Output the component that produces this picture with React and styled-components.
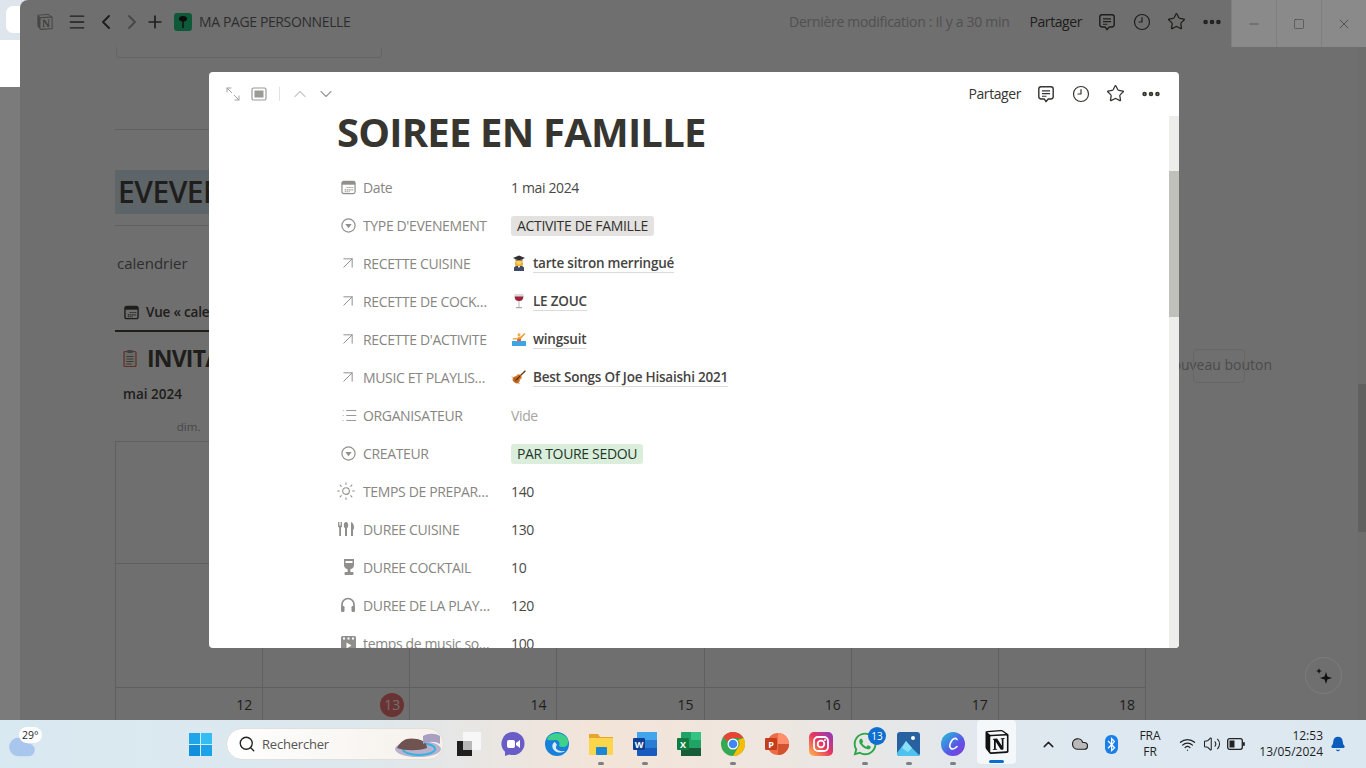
import React from "react";
import styled, { createGlobalStyle } from "styled-components";
import {
  ArrowUpRight,
  Bell,
  ChevronDown,
  ChevronLeft,
  ChevronRight,
  ChevronUp,
  Clock9,
  Cloud,
  List,
  Maximize2,
  Menu,
  Minus,
  MoreHorizontal,
  Plus,
  Search,
  Square,
  Star,
  Sun,
  Volume2,
  Wifi,
  X,
} from "lucide-react";
import { SiNotion } from "react-icons/si";
import { FaBluetoothB, FaWhatsapp } from "react-icons/fa";

const SANS = `"Open Sans", "Noto Sans", sans-serif`;

const GlobalStyle = createGlobalStyle`
  html, body { margin: 0; padding: 0; height: 100%; overflow: hidden; }
  body { font-family: ${SANS}; background: #dfe5ec; }
  * { box-sizing: border-box; }
  svg { flex: none; }
`;

const Desktop = styled.div`
  width: 1366px;
  height: 768px;
  display: flex;
  flex-direction: column;
  overflow: hidden;
`;

const Workspace = styled.div`
  height: 720px;
  display: flex;
`;

const BrowserEdge = styled.div`
  width: 20px;
  display: flex;
  flex-direction: column;
  background: #7b7b7b;
`;

const EdgeTop = styled.div`
  height: 87px;
  background: #dfe5ec;
  padding-top: 6px;
  display: flex;
  flex-direction: column;
  align-items: flex-end;
  gap: 7px;
`;

const EdgeTab = styled.div`
  width: ${({ wide }) => (wide ? "20px" : "14px")};
  height: ${({ wide }) => (wide ? "47px" : "27px")};
  background: #fff;
  border-radius: ${({ wide }) => (wide ? "0" : "7px 0 0 7px")};
`;

const AppWindow = styled.div`
  flex: 1;
  min-width: 0;
  position: relative;
  display: flex;
  flex-direction: column;
  background: #fff;
  border-radius: 8px 0 0 0;
  overflow: hidden;
`;

const TitleBar = styled.header`
  height: 47px;
  flex: none;
  display: flex;
  align-items: center;
  padding: 0 0 4px 17px;
  color: #37352f;
  font-size: 14px;
`;

const TitleIcon = styled.span`
  display: flex;
  justify-content: center;
  flex: none;
  width: ${({ w }) => w}px;
  color: ${({ faint }) => (faint ? "#9b9a97" : "#37352f")};
`;

const PageBadge = styled.span`
  width: 18px;
  height: 18px;
  margin-left: 17px;
  border-radius: 3px;
  background: #0ec97a;
  display: flex;
  align-items: center;
  justify-content: center;
`;

const PageName = styled.span`
  margin-left: 7px;
  letter-spacing: -0.38px;
  color: #5b5b60;
`;

const Edited = styled.span`
  margin-left: auto;
  color: #b4b3b0;
  letter-spacing: -0.3px;
`;

const ShareLabel = styled.span`
  font-size: 14px;
  letter-spacing: -0.42px;
  color: #37352f;
`;

const TitleActions = styled.div`
  display: flex;
  align-items: center;
  margin-left: 20px;
  margin-right: 2px;
`;

const ActionsGroup = styled.div`
  display: flex;
  align-items: center;
  margin-left: 7px;
`;

const ActionSlot = styled.span`
  width: 35px;
  display: flex;
  justify-content: center;
  color: #37352f;
`;

const WindowControls = styled.div`
  position: relative;
  z-index: 2;
  align-self: flex-start;
  display: flex;
  height: 47px;
`;

const WindowControl = styled.span`
  width: 45px;
  height: 47px;
  display: flex;
  align-items: center;
  justify-content: center;
  background: #8a8a8a;
  border-left: 1px solid #7f7f7f;
  color: #333;
`;

const Main = styled.div`
  flex: 1;
  min-height: 0;
  display: flex;
`;

const Page = styled.main`
  flex: 1;
  min-width: 0;
  padding-left: 95px;
  display: flex;
  flex-direction: column;
  color: #37352f;
  overflow: hidden;
  & > * {
    flex: none;
  }
`;

const CardTail = styled.div`
  width: 266px;
  height: 11px;
  margin-left: 1px;
  border: 1px solid #e4e4e2;
  border-top: 0;
  border-radius: 0 0 4px 4px;
`;

const Rule = styled.hr`
  width: 1031px;
  margin: ${({ top }) => top}px 0 0;
  border: 0;
  border-top: 1px solid #dcdbd8;
`;

const SectionHeading = styled.h2`
  margin: 40px 0 0;
  width: 400px;
  height: 44px;
  padding-left: 3px;
  background: #d3e5ef;
  color: #37352f;
  font-size: 30px;
  font-weight: 600;
  line-height: 44px;
  letter-spacing: -0.5px;
`;

const Description = styled.p`
  margin: 27px 0 0 2px;
  font-size: 15px;
  line-height: 20px;
  color: #5c5c5c;
`;

const ViewTab = styled.div`
  margin-top: 30px;
  width: 1031px;
  height: 29px;
  font-size: 13.5px;
  font-weight: 600;
  letter-spacing: -0.2px;
`;

const ViewUnderline = styled.span`
  height: 29px;
  width: 220px;
  padding-left: 9px;
  display: flex;
  align-items: flex-start;
  gap: 7px;
  line-height: 18px;
  white-space: nowrap;
  border-bottom: 2px solid #37352f;
`;

const CollectionRow = styled.div`
  width: 1157px;
  height: 36px;
  margin-top: 8px;
  display: flex;
  align-items: center;
  justify-content: space-between;
  padding-left: 8px;
`;

const CollectionTitle = styled.h3`
  margin: 0;
  display: flex;
  align-items: center;
  gap: 10px;
  font-size: 23px;
  font-weight: 700;
  letter-spacing: -0.8px;
`;

const NewButton = styled.span`
  position: relative;
  margin-top: 12px;
  font-size: 14px;
  font-weight: 500;
  color: #a5a5a5;
  white-space: nowrap;
  &::after {
    content: "";
    position: absolute;
    left: 29px;
    top: -6px;
    width: 50px;
    height: 32px;
    border: 1px solid #e8e8e8;
    border-radius: 4px;
  }
`;

const MonthLabel = styled.div`
  margin: 9px 0 0 8px;
  font-size: 13.5px;
  font-weight: 600;
  line-height: 18px;
`;

const WeekDays = styled.div`
  width: 1031px;
  margin-top: 16px;
  height: 22px;
  display: grid;
  grid-template-columns: repeat(7, 1fr);
  font-size: 11.5px;
  color: #9b9a97;
  text-align: center;
`;

const CalendarGrid = styled.div`
  width: 1031px;
  display: grid;
  grid-template-columns: repeat(7, 1fr);
  grid-template-rows: 122px 124px 60px;
  border-top: 1px solid #d8d8d6;
  border-left: 1px solid #d8d8d6;
`;

const DayCell = styled.div`
  border-right: 1px solid #d8d8d6;
  border-bottom: 1px solid #d8d8d6;
  padding: 5px ${({ today }) => (today ? "5px" : "10px")} 0 0;
  display: flex;
  justify-content: flex-end;
  font-size: 14px;
  line-height: 24px;
  color: #37352f;
`;

const TodayMark = styled.span`
  width: 24px;
  height: 24px;
  border-radius: 50%;
  background: #f06a6a;
  color: #fff;
  text-align: center;
`;

const PageScroll = styled.div`
  width: 8px;
  flex: none;
  padding-top: 337px;
  background: #fcfcfb;
`;

const PageThumb = styled.div`
  height: 148px;
  background: #d9d9d5;
`;

const Scrim = styled.div`
  position: absolute;
  inset: 0;
  z-index: 1;
  padding-left: 2px;
  background: rgba(15, 15, 15, 0.6);
  display: flex;
  align-items: center;
  justify-content: center;
`;

const AiButton = styled.span`
  position: absolute;
  right: 24px;
  bottom: 26px;
  width: 37px;
  height: 37px;
  border-radius: 50%;
  border: 1px solid #7d7d7d;
  display: flex;
  align-items: center;
  justify-content: center;
`;

const Modal = styled.section`
  width: 970px;
  height: 576px;
  background: #fff;
  border-radius: 4px;
  display: flex;
  flex-direction: column;
  overflow: hidden;
`;

const ModalBar = styled.div`
  height: 44px;
  flex: none;
  padding: 0 11px 1px 11px;
  display: flex;
  align-items: center;
`;

const ModalTool = styled.span`
  width: 26px;
  display: flex;
  justify-content: center;
  color: ${({ light }) => (light ? "#c9c8c5" : "#9b9a97")};
`;

const ModalDivider = styled.span`
  width: 1px;
  height: 14px;
  margin: 0 7px;
  background: #e3e2e0;
`;

const ModalActions = styled.div`
  margin-left: auto;
  display: flex;
  align-items: center;
`;

const ModalBody = styled.div`
  flex: 1;
  min-height: 0;
  display: flex;
`;

const ModalContent = styled.div`
  flex: 1;
  min-width: 0;
  padding-left: 128px;
  overflow: hidden;
  color: #37352f;
`;

const ModalScroll = styled.div`
  width: 10px;
  flex: none;
  padding-top: 55px;
  background: #ededeb;
`;

const ModalThumb = styled.div`
  height: 146px;
  background: #c0c0bb;
`;

const DocTitle = styled.h1`
  margin: -6px 0 0;
  height: 44px;
  font-size: 40px;
  font-weight: 700;
  line-height: 44px;
  letter-spacing: -0.8px;
  white-space: nowrap;
`;

const Properties = styled.div`
  margin-top: 14px;
  display: flex;
  flex-direction: column;
`;

const PropRow = styled.div`
  height: 38px;
  flex: none;
  display: flex;
  align-items: center;
  font-size: 14px;
`;

const PropIcon = styled.span`
  width: 26px;
  height: 18px;
  flex: none;
  padding-left: 4px;
  display: flex;
  align-items: center;
  color: #908f8b;
`;

const PropLabel = styled.span`
  width: 128px;
  margin-right: 20px;
  flex: none;
  color: #878682;
  letter-spacing: -0.36px;
  white-space: nowrap;
  overflow: hidden;
  text-overflow: ellipsis;
`;

const PropValue = styled.span`
  letter-spacing: -0.36px;
  color: ${({ empty }) => (empty ? "#a5a4a1" : "#4a4945")};
`;

const Tag = styled.span`
  height: 20px;
  margin-top: 1px;
  padding: 0 6px;
  border-radius: 3px;
  line-height: 20px;
  letter-spacing: -0.33px;
  background: ${({ green }) => (green ? "#dbeddb" : "#e3e2e0")};
  color: ${({ green }) => (green ? "#1c3829" : "#32302c")};
`;

const Relation = styled.span`
  display: flex;
  align-items: center;
  gap: 6px;
`;

const RelationEmoji = styled.span`
  width: 16px;
  height: 16px;
  display: flex;
`;

const RelationText = styled.span`
  font-weight: 600;
  font-size: 13.5px;
  line-height: 18px;
  letter-spacing: -0.22px;
  color: #45443f;
  border-bottom: 1px solid #dcdbd8;
`;

const Taskbar = styled.footer`
  height: 48px;
  flex: none;
  display: flex;
  align-items: center;
  background: linear-gradient(90deg, #d9e9f1 0%, #dde8ee 26%, #f3e4d8 44%, #efe6df 55%, #dfe8ef 74%, #dce8f1 100%);
  color: #1f1f1f;
`;

const Weather = styled.div`
  position: relative;
  width: 189px;
  height: 48px;
  flex: none;
  padding: 13px 0 0 8px;
`;

const WeatherTemp = styled.span`
  position: absolute;
  left: 19px;
  top: 7px;
  padding: 0 3px;
  border-radius: 8px;
  background: #fff;
  font-size: 10.5px;
  line-height: 16px;
`;

const StartSlot = styled.span`
  width: 37px;
  flex: none;
  display: flex;
`;

const SearchBox = styled.div`
  width: 218px;
  height: 32px;
  flex: none;
  padding-left: 11px;
  display: flex;
  align-items: center;
  gap: 6px;
  border-radius: 16px;
  border: 1px solid #e2dfda;
  background: linear-gradient(90deg, #ffffff, #f5f0ea);
  font-size: 13px;
  letter-spacing: -0.2px;
  color: #555;
`;

const SearchArt = styled.span`
  margin-left: auto;
  display: flex;
`;

const Apps = styled.div`
  margin-left: 3px;
  display: flex;
`;

const AppSlot = styled.span`
  position: relative;
  width: 44px;
  height: 48px;
  display: flex;
  align-items: center;
  justify-content: center;
  &::after {
    content: "";
    display: ${({ open }) => (open ? "block" : "none")};
    position: absolute;
    left: 19px;
    bottom: 3px;
    width: 6px;
    height: 3px;
    border-radius: 2px;
    background: #7c7f83;
  }
`;

const ActiveApp = styled(AppSlot)`
  width: 39px;
  height: 44px;
  margin-left: 2px;
  border-radius: 4px;
  background: #f5f8fa;
  &::after {
    display: block;
    left: 12px;
    bottom: 1px;
    width: 15px;
    background: #0a6fd1;
  }
`;

const AppBadge = styled.span`
  position: absolute;
  right: 1px;
  top: 7px;
  width: 18px;
  height: 18px;
  border-radius: 50%;
  background: #0f6fd0;
  color: #fff;
  font-size: 10px;
  line-height: 18px;
  text-align: center;
`;

const Tray = styled.div`
  margin-left: 22px;
  display: flex;
  align-items: center;
`;

const TraySlot = styled.span`
  width: ${({ w }) => w}px;
  display: flex;
  justify-content: center;
  color: #222;
`;

const Language = styled.span`
  width: 40px;
  margin: 0 5px 0 10px;
  text-align: center;
  font-size: 12px;
  line-height: 16px;
`;

const DateTime = styled.span`
  width: 74px;
  margin-left: 1px;
  text-align: right;
  font-size: 12px;
  line-height: 16px;
`;

const propIcons = {
  date: (
    <svg width="15" height="15" viewBox="0 0 16 16">
      <rect x="1" y="1.500" width="14" height="13" rx="2" fill="none" stroke="currentColor" strokeWidth="1.300" />
      <rect x="1" y="2" width="14" height="3" fill="currentColor" />
      <path d="M6 8h7M4 10.500h9M4 12.500h6" stroke="currentColor" strokeWidth="1.200" strokeDasharray="1.300 .7" />
    </svg>
  ),
  select: (
    <svg width="15" height="15" viewBox="0 0 15 15">
      <circle cx="7.500" cy="7.500" r="6.600" fill="none" stroke="currentColor" strokeWidth="1.200" />
      <path d="M4.300 6h6.400L7.500 10.300z" fill="currentColor" />
    </svg>
  ),
  relation: <ArrowUpRight size={20} strokeWidth={1.2} style={{ marginLeft: -3 }} />,
  list: <List size={17} strokeWidth={1.3} />,
  sun: <Sun size={20} strokeWidth={1.3} style={{ marginLeft: -5 }} />,
  food: (
    <svg width="17" height="16" viewBox="0 0 17 16" fill="currentColor" style={{ marginLeft: -3 }}>
      <path d="M0 1h.9v3.500h.7V1h.8v3.500h.7V1H4v4.500L3 6.800V15H1.200V6.800L0 5.500z" />
      <path d="M8 1c1.500 0 2.200 1.700 2.200 3.300S9.500 6.900 9 7.200V15H7V7.200C6.500 6.900 5.800 5.900 5.800 4.300S6.500 1 8 1z" />
      <path d="M13 1c2 .8 3 3 3 5.500 0 1-.3 2-1 2.500v6h-2z" />
    </svg>
  ),
  glass: (
    <svg width="14" height="18" viewBox="0 0 14 18" fill="currentColor" style={{ marginLeft: 1 }}>
      <path d="M2 1h10v6c0 2.600-2 4.400-5 4.400S2 9.600 2 7z" />
      <rect x="5.600" y="11" width="2.800" height="3" />
      <rect x="2.500" y="14" width="9" height="3" rx="1" />
      <rect x="3.500" y="3" width="7" height="2" fill="#fff" />
    </svg>
  ),
  headphones: (
    <svg width="16" height="16" viewBox="0 0 16 16" fill="none" stroke="currentColor" style={{ marginLeft: -1 }}>
      <path d="M2 10V7.500a6 6 0 0 1 12 0V10" strokeWidth="1.700" />
      <rect x="1" y="9" width="3.500" height="6" rx="1.200" fill="currentColor" stroke="none" />
      <rect x="11.500" y="9" width="3.500" height="6" rx="1.200" fill="currentColor" stroke="none" />
    </svg>
  ),
  film: (
    <svg width="15" height="15" viewBox="0 0 15 15">
      <rect width="15" height="15" rx="1.500" fill="currentColor" />
      <path d="M2 1.500h2v2H2zM6.500 1.500h2v2h-2zM11 1.500h2v2h-2z" fill="#fff" />
      <path d="M5.500 6.500v6l5-3z" fill="#fff" />
    </svg>
  ),
};

const EMOJI = {
  teacher: (
    <svg width="16" height="16" viewBox="0 0 16 16">
      <path d="M3 16v-3c0-1.600 2-2.500 5-2.500s5 .9 5 2.500v3z" fill="#3f4a63" />
      <path d="M6.500 10.500L8 13l1.500-2.500z" fill="#fff" />
      <path d="M4 8c-.3 1.500.2 2.500 1 3h6c.8-.5 1.300-1.500 1-3L11 5H5z" fill="#e8a93a" />
      <circle cx="8" cy="7" r="2.700" fill="#ffcf5a" />
      <path d="M8 .5L14 3 8 5.500 2 3z" fill="#2f2f33" />
      <path d="M4.500 4v1.500h7V4L8 5.500z" fill="#45454b" />
    </svg>
  ),
  wine: (
    <svg width="16" height="16" viewBox="0 0 16 16">
      <path d="M3.500 1h9c.7 4.500-1 7.500-4.500 7.500S2.800 5.500 3.500 1z" fill="#d9d9dc" />
      <path d="M3.700 3.500h8.600c0 3-1.600 4.500-4.300 4.500S3.700 6.500 3.700 3.500z" fill="#a0213c" />
      <rect x="7.500" y="8" width="1" height="6" fill="#b9b9bd" />
      <rect x="5" y="14" width="6" height="1.300" rx=".6" fill="#a9a9ad" />
    </svg>
  ),
  swim: (
    <svg width="16" height="16" viewBox="0 0 16 16">
      <rect x="1" y="10" width="14" height="5" fill="#3fa3e8" />
      <rect x="1" y="8.500" width="14" height="1.500" fill="#fff" />
      <path d="M6 10l.6-4 3-.6L13.500 2l.9 1-4 4.200L10 10z" fill="#f29a3c" />
      <circle cx="8" cy="3.800" r="1.500" fill="#f0a94c" />
      <path d="M1 8.500h5V7H2.500z" fill="#e8b13f" />
      <path d="M6.300 8h3.500v2H6.300z" fill="#e25c2f" />
    </svg>
  ),
  violin: (
    <svg width="16" height="16" viewBox="0 0 16 16">
      <g transform="rotate(45 8 8)">
        <rect x="7.300" y="-1" width="1.400" height="8" fill="#5d3a1e" />
        <ellipse cx="8" cy="8" rx="2.800" ry="2.400" fill="#d9761d" />
        <ellipse cx="8" cy="12" rx="3.700" ry="3.200" fill="#c9641a" />
        <rect x="7.500" y="6" width="1" height="7" fill="#43280f" />
      </g>
      <path d="M1 7.500L8.500 15" stroke="#8a6a44" strokeWidth=".7" />
    </svg>
  ),
};

const properties = [
  { icon: "date", label: "Date", value: "1 mai 2024" },
  { icon: "select", label: "TYPE D'EVENEMENT", tag: "ACTIVITE DE FAMILLE" },
  { icon: "relation", label: "RECETTE CUISINE", emoji: "teacher", link: "tarte sitron merringué" },
  { icon: "relation", label: "RECETTE DE COCKTAIL", emoji: "wine", link: "LE ZOUC" },
  { icon: "relation", label: "RECETTE D'ACTIVITE", emoji: "swim", link: "wingsuit" },
  { icon: "relation", label: "MUSIC ET PLAYLISTES", emoji: "violin", link: "Best Songs Of Joe Hisaishi 2021" },
  { icon: "list", label: "ORGANISATEUR", value: "Vide", empty: true },
  { icon: "select", label: "CREATEUR", tag: "PAR TOURE SEDOU", green: true },
  { icon: "sun", label: "TEMPS DE PREPARATION", value: "140" },
  { icon: "food", label: "DUREE CUISINE", value: "130" },
  { icon: "glass", label: "DUREE COCKTAIL", value: "10" },
  { icon: "headphones", label: "DUREE DE LA PLAYLIST", value: "120" },
  { icon: "film", label: "temps de music sortie", value: "100" },
];

const calendarCells = [...Array(14).fill(null), 12, 13, 14, 15, 16, 17, 18];

const CommentIcon = () => (
  <svg width="18" height="18" viewBox="0 0 20 20" fill="none" stroke="currentColor" strokeWidth="1.600" strokeLinejoin="round">
    <path d="M4.500 2h11A2.500 2.500 0 0 1 18 4.500v8.500a2.500 2.500 0 0 1-2.500 2.500h-3L10 18.500 8 15.500H4.500A2.500 2.500 0 0 1 2 13V4.500A2.500 2.500 0 0 1 4.500 2z" />
    <path d="M5.500 6.500h9M5.500 9.500h9M5.500 12.500h5" strokeWidth="1.300" />
  </svg>
);

const PageActions = () => (
  <ActionsGroup>
    <ActionSlot><CommentIcon /></ActionSlot>
    <ActionSlot><Clock9 size={18} strokeWidth={1.6} /></ActionSlot>
    <ActionSlot><Star size={19} strokeWidth={1.6} /></ActionSlot>
    <ActionSlot><MoreHorizontal size={22} strokeWidth={3} /></ActionSlot>
  </ActionsGroup>
);

const Win11Logo = () => (
  <svg width="23" height="23" viewBox="0 0 23 23">
    <rect width="11" height="11" fill="#1fa6ea" />
    <rect x="12" width="11" height="11" fill="#34bdf2" />
    <rect y="12" width="11" height="11" fill="#0f8fdc" />
    <rect x="12" y="12" width="11" height="11" fill="#1aa3e8" />
  </svg>
);

const appIcons = [
  {
    name: "taskview",
    icon: (
      <svg width="24" height="24" viewBox="0 0 24 24">
        <rect x="6" y="0" width="18" height="18" fill="#f7f7f7" />
        <rect y="9" width="15" height="15" fill="#1f1f1f" />
        <rect x="6" y="9" width="9" height="9" fill="#b8b8b8" />
      </svg>
    ),
  },
  {
    name: "meet",
    icon: (
      <svg width="24" height="24" viewBox="0 0 24 24">
        <path d="M12 0a11.500 11.500 0 0 1 0 23c-1.300 0-2.600-.2-3.700-.6L4 24v-4.300A11.500 11.500 0 0 1 12 0z" fill="#6a5cc7" />
        <rect x="6" y="8" width="8" height="8" rx="2" fill="#fff" />
        <path d="M15 11l4-3v8l-4-3z" fill="#fff" />
      </svg>
    ),
  },
  {
    name: "edge",
    icon: (
      <svg width="24" height="24" viewBox="0 0 24 24">
        <circle cx="12" cy="12" r="12" fill="#1780d8" />
        <path d="M2 7C5 0 17-1 22 6c3 5 0 9-4 9-3 0-4-1-4-2 1-1 1-5-4-5-4 0-7 1-8-1z" fill="#3fd08a" />
        <path d="M10 10c-3 1-4 6 0 9 3 2 7 2 10 0-3 .5-8 0-9-3-.5-2 1-3 1-3z" fill="#fff" opacity=".85" />
      </svg>
    ),
  },
  {
    name: "explorer",
    open: true,
    icon: (
      <svg width="24" height="24" viewBox="0 0 24 24">
        <path d="M0 2h9l2 3h13v4H0z" fill="#e8a52c" />
        <rect y="6" width="24" height="17" rx="1" fill="#fbd54a" />
        <rect x="7" y="15" width="11" height="8" rx="1" fill="#1a86d6" />
      </svg>
    ),
  },
  {
    name: "word",
    open: true,
    icon: (
      <svg width="24" height="24" viewBox="0 0 24 24">
        <rect x="4" y="0" width="20" height="24" rx="1" fill="#185abd" />
        <rect x="4" y="0" width="20" height="8" fill="#41a5ee" />
        <rect x="4" y="8" width="20" height="8" fill="#2b7cd3" />
        <rect y="6" width="12" height="12" rx="1" fill="#103f91" />
        <text x="6" y="15.500" fontSize="9" fontWeight="700" fill="#fff" textAnchor="middle" fontFamily="Open Sans">W</text>
      </svg>
    ),
  },
  {
    name: "excel",
    icon: (
      <svg width="24" height="24" viewBox="0 0 24 24">
        <rect x="4" y="0" width="20" height="24" rx="1" fill="#21a366" />
        <rect x="14" y="0" width="10" height="8" fill="#33c481" />
        <rect x="4" y="16" width="20" height="8" fill="#185c37" />
        <rect y="6" width="12" height="12" rx="1" fill="#107c41" />
        <text x="6" y="15.500" fontSize="9" fontWeight="700" fill="#fff" textAnchor="middle" fontFamily="Open Sans">X</text>
      </svg>
    ),
  },
  {
    name: "chrome",
    open: true,
    icon: (
      <svg width="24" height="24" viewBox="0 0 24 24">
        <circle cx="12" cy="12" r="12" fill="#34a853" />
        <path d="M12 0a12 12 0 0 1 10.400 6H12a6 6 0 0 0-5.600 3.800L2.300 5A12 12 0 0 1 12 0z" fill="#ea4335" />
        <path d="M22.400 6A12 12 0 0 1 12 24l5-8.500A6 6 0 0 0 17 8z" fill="#fbbc05" />
        <circle cx="12" cy="12" r="5.500" fill="#fff" />
        <circle cx="12" cy="12" r="4.300" fill="#4285f4" />
      </svg>
    ),
  },
  {
    name: "powerpoint",
    icon: (
      <svg width="24" height="24" viewBox="0 0 24 24">
        <circle cx="13" cy="12" r="11" fill="#ed6c47" />
        <path d="M13 1a11 11 0 0 1 11 11H13z" fill="#ff8f6b" />
        <path d="M13 12h11a11 11 0 0 1-11 11z" fill="#d35230" />
        <rect y="6" width="12" height="12" rx="1" fill="#c43e1c" />
        <text x="6" y="15.500" fontSize="9" fontWeight="700" fill="#fff" textAnchor="middle" fontFamily="Open Sans">P</text>
      </svg>
    ),
  },
  {
    name: "instagram",
    icon: (
      <svg width="24" height="24" viewBox="0 0 24 24">
        <defs>
          <linearGradient id="ig" x1="0" y1="1" x2="1" y2="0">
            <stop offset="0" stopColor="#fdc14b" />
            <stop offset=".5" stopColor="#e8365d" />
            <stop offset="1" stopColor="#8a3ac4" />
          </linearGradient>
        </defs>
        <rect width="24" height="24" rx="5" fill="url(#ig)" />
        <rect x="5" y="5" width="14" height="14" rx="4" fill="none" stroke="#fff" strokeWidth="1.800" />
        <circle cx="12" cy="12" r="3.300" fill="none" stroke="#fff" strokeWidth="1.800" />
        <circle cx="16" cy="8" r="1" fill="#fff" />
      </svg>
    ),
  },
  {
    name: "whatsapp",
    open: true,
    badge: "13",
    icon: <FaWhatsapp size={26} color="#2aa748" />,
  },
  {
    name: "photos",
    open: true,
    icon: (
      <svg width="24" height="24" viewBox="0 0 24 24">
        <rect width="23" height="24" rx="3" fill="#27619f" />
        <path d="M0 21l9-12 6 7 8 8H3a3 3 0 0 1-3-3z" fill="#4fc3f0" />
        <path d="M9 9l6 7-4 4-6-4z" fill="#8be0f7" />
        <circle cx="16" cy="6" r="2" fill="#fff" />
      </svg>
    ),
  },
  {
    name: "canva",
    open: true,
    icon: (
      <svg width="24" height="24" viewBox="0 0 24 24">
        <defs>
          <linearGradient id="cv" x1="0" y1="0" x2="1" y2="1">
            <stop offset="0" stopColor="#1fc8d8" />
            <stop offset=".6" stopColor="#5a55e8" />
            <stop offset="1" stopColor="#8b35d6" />
          </linearGradient>
        </defs>
        <circle cx="12" cy="12" r="12" fill="url(#cv)" />
        <path d="M16 7.500c-1-2-4-1-5.500 1.500S8 15 10 16.500s4.500-.5 6-2" fill="none" stroke="#fff" strokeWidth="1.600" strokeLinecap="round" />
      </svg>
    ),
  },
];

const App = () => (
  <Desktop>
    <GlobalStyle />
    <Workspace>
      <BrowserEdge>
        <EdgeTop>
          <EdgeTab />
          <EdgeTab wide />
        </EdgeTop>
      </BrowserEdge>
      <AppWindow>
        <TitleBar>
          <TitleIcon w={16} faint><SiNotion size={16} /></TitleIcon>
          <TitleIcon w={48}><Menu size={20} strokeWidth={1.6} /></TitleIcon>
          <TitleIcon w={10}><ChevronLeft size={24} strokeWidth={2} /></TitleIcon>
          <TitleIcon w={42} faint><ChevronRight size={24} strokeWidth={1.8} /></TitleIcon>
          <TitleIcon w={4}><Plus size={20} strokeWidth={2} /></TitleIcon>
          <PageBadge>
            <svg width="10" height="12" viewBox="0 0 10 12" fill="#0a0a0a">
              <path d="M5 0c3 0 4.500 1.500 4 3.500-.4 1.500-2.500 2-3.300 2V12H4.300V5.500C3.500 5.500 1.400 5 1 3.500.5 1.500 2 0 5 0z" />
            </svg>
          </PageBadge>
          <PageName>MA PAGE PERSONNELLE</PageName>
          <Edited>Dernière modification : Il y a 30 min</Edited>
          <TitleActions>
            <ShareLabel>Partager</ShareLabel>
            <PageActions />
          </TitleActions>
          <WindowControls>
            <WindowControl><Minus size={14} strokeWidth={1} /></WindowControl>
            <WindowControl><Square size={12} strokeWidth={1} /></WindowControl>
            <WindowControl><X size={16} strokeWidth={1} /></WindowControl>
          </WindowControls>
        </TitleBar>
        <Main>
          <Page>
            <CardTail />
            <Rule top={71} />
            <SectionHeading>EVEVENEMENTS</SectionHeading>
            <Rule top={11} />
            <Description>calendrier</Description>
            <ViewTab>
              <ViewUnderline>
                <svg width="15" height="15" viewBox="0 0 16 16" style={{ marginTop: 2 }}>
                  <rect x="1" y="1.500" width="14" height="13" rx="2" fill="none" stroke="currentColor" strokeWidth="1.500" />
                  <rect x="1" y="2" width="14" height="3" fill="currentColor" />
                  <path d="M6 8h7M4 10.500h9M4 12.500h6" stroke="currentColor" strokeWidth="1.200" strokeDasharray="1.300 .7" />
                </svg>
                Vue « calendrier »
              </ViewUnderline>
            </ViewTab>
            <CollectionRow>
              <CollectionTitle>
                <svg width="14" height="18" viewBox="0 0 14 18">
                  <rect x="1" y="2.500" width="12" height="15" rx="1" fill="#f4f0e8" stroke="#d9604a" strokeWidth="1.200" />
                  <rect x="4" y="1" width="6" height="3" rx="1" fill="#8c8c8c" />
                  <path d="M3.500 7.500h7M3.500 10h7M3.500 12.500h7M3.500 15h5" stroke="#777" />
                </svg>
                INVITATIONS
              </CollectionTitle>
              <NewButton>nouveau bouton</NewButton>
            </CollectionRow>
            <MonthLabel>mai 2024</MonthLabel>
            <WeekDays>
              {["dim.", "lun.", "mar.", "mer.", "jeu.", "ven.", "sam."].map((day) => (
                <span key={day}>{day}</span>
              ))}
            </WeekDays>
            <CalendarGrid>
              {calendarCells.map((day, i) => (
                <DayCell key={i} today={day === 13}>
                  {day === 13 ? <TodayMark>13</TodayMark> : day}
                </DayCell>
              ))}
            </CalendarGrid>
          </Page>
          <PageScroll><PageThumb /></PageScroll>
        </Main>
        <Scrim>
          <Modal>
            <ModalBar>
              <ModalTool><Maximize2 size={16} strokeWidth={1.4} style={{ transform: "scaleX(-1)" }} /></ModalTool>
              <ModalTool>
                <svg width="16" height="14" viewBox="0 0 16 14">
                  <rect x="1" y="1" width="14" height="12" rx="1.500" fill="none" stroke="currentColor" strokeWidth="1.200" />
                  <rect x="3.500" y="3.500" width="9" height="7" fill="currentColor" />
                </svg>
              </ModalTool>
              <ModalDivider />
              <ModalTool light><ChevronUp size={20} strokeWidth={1.4} /></ModalTool>
              <ModalTool><ChevronDown size={20} strokeWidth={1.4} /></ModalTool>
              <ModalActions>
                <ShareLabel>Partager</ShareLabel>
                <PageActions />
              </ModalActions>
            </ModalBar>
            <ModalBody>
              <ModalContent>
                <DocTitle>SOIREE EN FAMILLE</DocTitle>
                <Properties>
                  {properties.map((p) => (
                    <PropRow key={p.label}>
                      <PropIcon>{propIcons[p.icon]}</PropIcon>
                      <PropLabel>{p.label}</PropLabel>
                      {p.tag && <Tag green={p.green}>{p.tag}</Tag>}
                      {p.link && (
                        <Relation>
                          <RelationEmoji>{EMOJI[p.emoji]}</RelationEmoji>
                          <RelationText>{p.link}</RelationText>
                        </Relation>
                      )}
                      {p.value && <PropValue empty={p.empty}>{p.value}</PropValue>}
                    </PropRow>
                  ))}
                </Properties>
              </ModalContent>
              <ModalScroll><ModalThumb /></ModalScroll>
            </ModalBody>
          </Modal>
          <AiButton>
            <svg width="18" height="18" viewBox="0 0 18 18" fill="#111">
              <path d="M11 5l1.400 4.600L17 11l-4.600 1.400L11 17l-1.400-4.600L5 11l4.600-1.400z" />
              <path d="M4 1l.8 2.200L7 4l-2.200.8L4 7l-.8-2.200L1 4l2.200-.8z" />
            </svg>
          </AiButton>
        </Scrim>
      </AppWindow>
    </Workspace>
    <Taskbar>
      <Weather>
        <Cloud size={28} fill="#a9c6ee" color="#a9c6ee" />
        <WeatherTemp>29°</WeatherTemp>
      </Weather>
      <StartSlot><Win11Logo /></StartSlot>
      <SearchBox>
        <Search size={18} strokeWidth={1.8} color="#222" />
        Rechercher
        <SearchArt>
          <svg width="50" height="28" viewBox="0 0 50 28">
            <ellipse cx="25" cy="19" rx="23" ry="8" fill="#b9b2cf" />
            <ellipse cx="26" cy="19" rx="16" ry="6" fill="none" stroke="#36b3e0" strokeWidth="2" />
            <path d="M4 18c4-8 10-11 20-9 6 1 10 4 10 9-8 3-22 3-30 0z" fill="#6f5350" />
            <path d="M30 6c5-3 12-3 17 0v8c-5-3-12-3-17 0z" fill="#a99fc0" />
          </svg>
        </SearchArt>
      </SearchBox>
      <Apps>
        {appIcons.map((app) => (
          <AppSlot key={app.name} open={app.open}>
            {app.icon}
            {app.badge && <AppBadge>{app.badge}</AppBadge>}
          </AppSlot>
        ))}
        <ActiveApp><SiNotion size={24} color="#111" /></ActiveApp>
      </Apps>
      <Tray>
        <TraySlot w={20}><ChevronUp size={17} strokeWidth={2} /></TraySlot>
        <TraySlot w={44}><Cloud size={18} fill="#b9b9b9" strokeWidth={1.6} /></TraySlot>
        <TraySlot w={18}>
          <FaBluetoothB size={13} color="#fff" style={{ background: "#1a7fe8", borderRadius: 6, padding: "2px 1px", width: 13, height: 19 }} />
        </TraySlot>
        <Language>FRA<br />FR</Language>
        <TraySlot w={24}><Wifi size={17} strokeWidth={1.7} /></TraySlot>
        <TraySlot w={25}><Volume2 size={18} strokeWidth={1.4} /></TraySlot>
        <TraySlot w={24}>
          <svg width="18" height="12" viewBox="0 0 18 12">
            <rect x=".7" y=".7" width="14.600" height="10.600" rx="2" fill="none" stroke="#222" strokeWidth="1.300" />
            <rect x="2.500" y="2.500" width="5" height="7" fill="#222" />
            <rect x="16" y="4" width="1.800" height="4" rx=".8" fill="#222" />
          </svg>
        </TraySlot>
        <DateTime>12:53<br />13/05/2024</DateTime>
        <TraySlot w={30}><Bell size={16} fill="#0b5cbd" color="#0b5cbd" /></TraySlot>
      </Tray>
    </Taskbar>
  </Desktop>
);

export default App;
